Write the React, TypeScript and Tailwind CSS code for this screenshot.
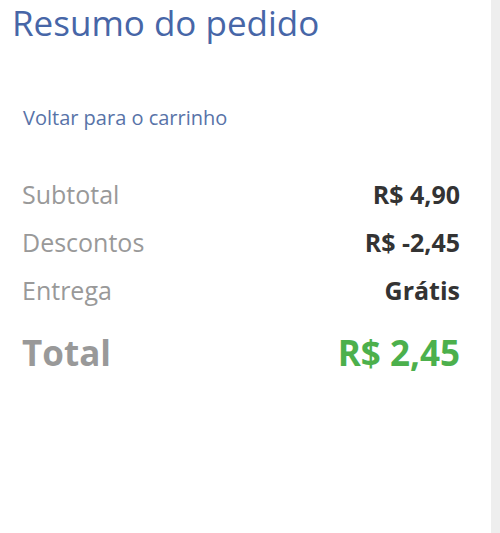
export default function App() {
  const rows = [
    { label: "Subtotal", value: "R$ 4,90" },
    { label: "Descontos", value: "R$ -2,45" },
    { label: "Entrega", value: "Grátis" },
  ];
  return (
    <div className="flex h-[533px] w-[500px] bg-white" style={{ fontFamily: '"Open Sans", sans-serif' }}>
      <div className="flex w-[491px] flex-col">
        <h1 className="pl-[12px] pt-[0px] text-[35px] leading-[45px] font-normal text-[#4766a7]">Resumo do pedido</h1>
        <a className="mt-[60px] pl-[23px] text-[20px] leading-[26px] text-[#5873a8]">Voltar para o carrinho</a>
        <div className="mt-[40px] flex flex-col pl-[22px] pr-[31px]">
          {rows.map((r) => (
            <div key={r.label} className="flex h-[48px] items-center justify-between">
              <span className="text-[25px] text-[#999999]">{r.label}</span>
              <span className="text-[25px] font-bold text-[#333333]">{r.value}</span>
            </div>
          ))}
          <div className="mt-[12px] flex items-center justify-between">
            <span className="text-[35px] font-bold text-[#999999]">Total</span>
            <span className="text-[35px] font-bold text-[#4cb04c]">R$ 2,45</span>
          </div>
        </div>
      </div>
      <div className="flex-1 bg-[#eeeeee]" />
    </div>
  );
}
